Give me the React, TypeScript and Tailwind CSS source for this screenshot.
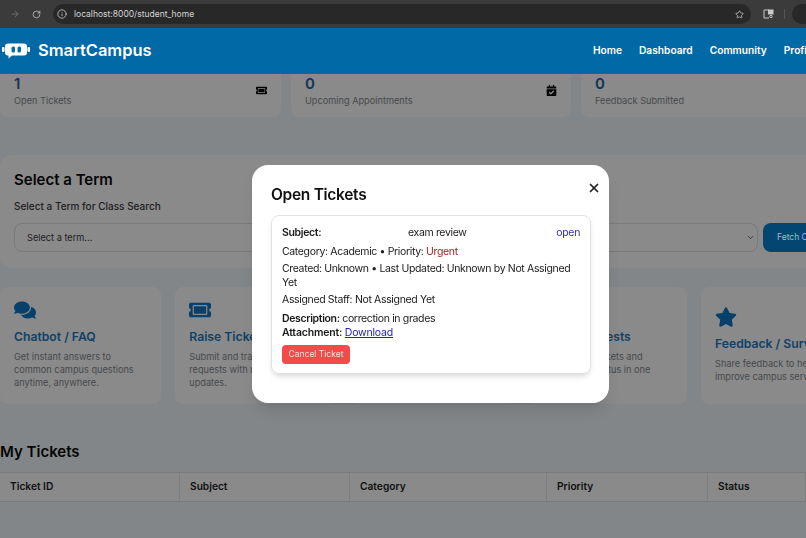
import React from "react";
import { ArrowRight, RotateCw, Info, Star, X, ChevronDown } from "lucide-react";
import { FaComments, FaTicketAlt, FaStar, FaCalendarCheck } from "react-icons/fa";

const actions = [
    { title: "Chatbot / FAQ", lines: ["Get instant answers to", "common campus questions", "anytime, anywhere."], icon: "chat" },
    { title: "Raise Ticket", lines: ["Submit and track", "requests with real-time", "updates."], icon: "ticket" },
    { title: "", lines: [], icon: "none" },
    { title: "Track Requests", lines: ["Review your tickets and", "check ticket status in one"], icon: "none" },
    { title: "Feedback / Survey", lines: ["Share feedback to help", "improve campus services."], icon: "star" },
];

const Logo = () => (
    <svg width="28" height="16" viewBox="0 0 28 16" fill="white">
        <rect x="0" y="4" width="2.5" height="5" rx="1" />
        <rect x="25.5" y="4" width="2.5" height="5" rx="1" />
        <path d="M6 0.5h16a3 3 0 0 1 3 3v6a3 3 0 0 1-3 3H10l-3.5 3v-3H6a3 3 0 0 1-3-3v-6a3 3 0 0 1 3-3z" />
        <rect x="9.5" y="3.5" width="3.5" height="6" rx="1.5" fill="#006ca8" />
        <rect x="15.5" y="3.5" width="3.5" height="6" rx="1.5" fill="#006ca8" />
    </svg>
);

const StatCard = ({ value, label, icon }: { value: string; label: string; icon?: React.ReactNode }) => (
    <div className="h-[43px] bg-[#8a8a8a] rounded-b-lg pl-[14px] pr-[14px] flex items-start justify-between">
        <div>
            <div className="text-[15px] leading-[18px] mt-[1px] font-semibold text-[#12364f]">{value}</div>
            <div className="text-[9.2px] leading-[14px] mt-[1px] text-[#46494c]">{label}</div>
        </div>
        {icon && <div className="mt-[11px] text-[11px] text-black">{icon}</div>}
    </div>
);

export default function App() {
    return (
        <div className="relative w-[806px] h-[538px] overflow-hidden bg-[#828688] font-['Inter','Noto_Sans',sans-serif]">
            {/* Browser bar */}
            <div className="h-[28px] bg-[#3b3b3b] flex items-center pl-[10px] text-[#c9c9c9]">
                <ArrowRight size={10} className="text-[#777] flex-none" />
                <RotateCw size={9} className="ml-[12px] flex-none" />
                <div className="ml-[12px] w-[698px] h-[20px] flex-none bg-[#282828] rounded-full flex items-center pl-[4px] pr-[7px]">
                    <Info size={10} />
                    <span className="ml-[7px] text-[8.5px] text-[#d5d5d5]">localhost:8000/student_home</span>
                    <Star size={9} className="ml-auto" />
                </div>
                <svg width="11" height="10" viewBox="0 0 11 10" fill="none" stroke="#c9c9c9" className="ml-[12px] flex-none">
                    <path d="M6 1H1v8h5" />
                    <rect x="5.5" y="1" width="4.5" height="4" fill="#c9c9c9" />
                    <circle cx="8" cy="7.5" r="1.2" />
                </svg>
                <div className="ml-[10px] w-[1px] h-[10px] bg-[#555] flex-none" />
                <div className="ml-[7px] w-[30px] h-[20px] bg-[#282828] rounded-l-full flex-none" />
            </div>

            {/* Header */}
            <div className="h-[46px] bg-[#0069a6] border-b border-[#0b6a8e] flex items-center relative z-10">
                <div className="ml-[2px]">
                    <Logo />
                </div>
                <div className="ml-[8px] text-[16.5px] font-semibold text-white">SmartCampus</div>
                <div className="ml-auto flex gap-[17px] text-[10.2px] font-semibold text-white w-[213px] overflow-hidden whitespace-nowrap flex-none">
                    <span>Home</span>
                    <span>Dashboard</span>
                    <span>Community</span>
                    <span>Profile</span>
                </div>
            </div>

            {/* Stats */}
            <div className="flex gap-[10px] pr-[10px] w-[1100px]">
                <div className="w-[281px]">
                    <StatCard value="1" label="Open Tickets" icon={<FaTicketAlt />} />
                </div>
                <div className="w-[280px]">
                    <StatCard value="0" label="Upcoming Appointments" icon={<FaCalendarCheck />} />
                </div>
                <div className="w-[280px]">
                    <StatCard value="0" label="Feedback Submitted" />
                </div>
            </div>

            {/* Select a term */}
            <div className="mt-[38px] h-[113px] w-[1000px] bg-[#8a8a8a] rounded-xl pt-[16px] pl-[14px]">
                <div className="text-[15px] leading-[18px] font-semibold text-[#050505]">Select a Term</div>
                <div className="mt-[10px] text-[10px] leading-[14px] font-medium text-[#1e2022]">Select a Term for Class Search</div>
                <div className="mt-[10px] flex gap-[5px]">
                    <div className="w-[744px] h-[29px] border border-[#787a7c] rounded-lg flex items-center justify-between pl-[12px] pr-[2px] text-[9.2px] text-[#1e2022]">
                        <span>Select a term...</span>
                        <ChevronDown size={9} />
                    </div>
                    <div className="w-[120px] h-[29px] bg-[#034672] rounded-lg pl-[14px] flex items-center text-[8.5px] text-[#a9bac6]">
                        Fetch Classes
                    </div>
                </div>
            </div>

            {/* Action cards */}
            <div className="mt-[19px] flex gap-[14px] w-[1000px]">
                {actions.map((a) => (
                    <div
                        key={a.icon + a.title}
                        className={
                            a.icon === "star"
                                ? "w-[161.25px] h-[117px] flex-none bg-[#8a8a8a] rounded-lg pl-[14px] pt-[20px]"
                                : "w-[161.25px] h-[117px] flex-none bg-[#8a8a8a] rounded-lg pl-[14px] pt-[13px]"
                        }
                    >
                        <div className="h-[21px] text-[22px] text-[#07406a] flex items-end">
                            {a.icon === "chat" && <FaComments />}
                            {a.icon === "ticket" && <FaTicketAlt />}
                            {a.icon === "star" && <FaStar />}
                        </div>
                        <div className="mt-[8px] h-[16px] text-[12.2px] leading-[16px] font-semibold text-[#0f4168] whitespace-nowrap">{a.title}</div>
                        <div className="mt-[5px] text-[9.2px] leading-[13px] text-[#46494c] whitespace-nowrap">
                            {a.lines.map((l) => (
                                <div key={l}>{l}</div>
                            ))}
                        </div>
                    </div>
                ))}
            </div>

            {/* Tickets table */}
            <div className="mt-[38px] text-[15px] leading-[20px] font-semibold text-[#050505]">My Tickets</div>
            <div className="mt-[10px] grid grid-cols-[180px_170px_197px_161px_98px] h-[30px] bg-[#8a8a8a] border-y border-[#7a7b7c] text-[10.2px] font-semibold text-[#111]">
                {["Ticket ID", "Subject", "Category", "Priority", "Status"].map((h) => (
                    <div key={h} className="pl-[10px] flex items-center border-r border-[#7c7d7e]">
                        {h}
                    </div>
                ))}
            </div>

            {/* Modal */}
            <div className="absolute inset-x-0 bottom-0 top-[74px] flex items-start backdrop-blur-[0.5px]">
                <div className="relative mt-[91px] ml-[252px] w-[357px] h-[238px] flex-none bg-white rounded-2xl pt-[20px] px-[19px] shadow-lg">
                    <X size={14} strokeWidth={3} className="absolute top-[16px] right-[8px] text-[#222]" />
                    <div className="text-[15.5px] leading-[20px] font-semibold text-[#111] tracking-[-0.3px]">Open Tickets</div>
                    <div className="mt-[10px] w-[320px] h-[159px] border border-[#e2e2e2] rounded-lg shadow-md px-[10px] pt-[10px] text-[10.5px] tracking-[-0.35px] text-[#1a1a1a]">
                        <div className="flex leading-[14px]">
                            <span className="w-[126px] font-semibold">Subject:</span>
                            <span>exam review</span>
                            <span className="ml-auto text-[#2f2fb5]">open</span>
                        </div>
                        <div className="mt-[5px] leading-[14px]">
                            Category: Academic • Priority: <span className="text-[#9b1c1c]">Urgent</span>
                        </div>
                        <div className="mt-[3px] leading-[14px]">Created: Unknown • Last Updated: Unknown by Not Assigned Yet</div>
                        <div className="mt-[3px] leading-[14px]">Assigned Staff: Not Assigned Yet</div>
                        <div className="mt-[5px] leading-[14px]">
                            <span className="font-semibold">Description:</span> correction in grades
                        </div>
                        <div className="leading-[14px] tracking-[-0.2px]">
                            <span className="font-semibold">Attachment:</span>{" "}
                            <span className="underline text-[#2222bb]">Download</span>
                        </div>
                        <div className="mt-[5px] w-[68px] h-[19px] bg-[#f44a4a] rounded text-[8.5px] tracking-normal text-[#fbe3e3] flex items-center justify-center">
                            Cancel Ticket
                        </div>
                    </div>
                </div>
            </div>
        </div>
    );
}
